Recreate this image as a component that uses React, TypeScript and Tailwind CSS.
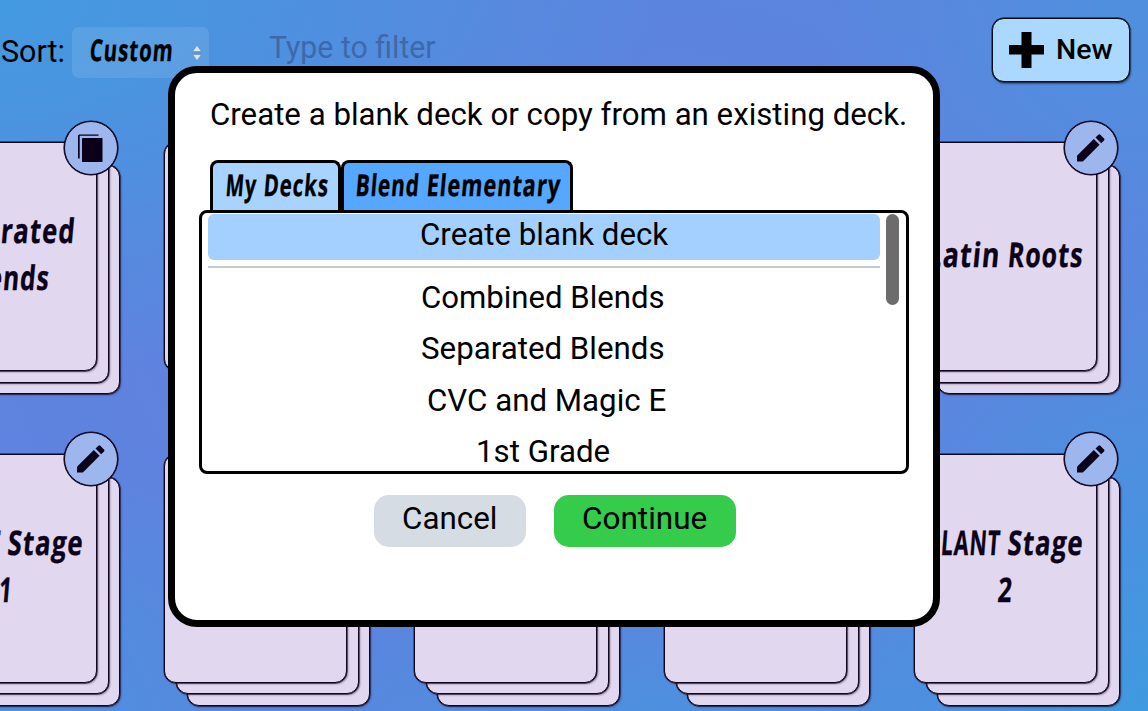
import { useLayoutEffect, useRef, useState } from "react";
import type { ReactNode } from "react";

type FitProps = { width: number; slant?: number; className?: string; children: ReactNode };

/** Sets one line of text to an exact width, with an optional slant. */
function Fit({ width, slant = 0, className = "", children }: FitProps) {
  const ref = useRef<HTMLSpanElement>(null);
  const [scale, setScale] = useState(1);
  useLayoutEffect(() => {
    if (ref.current) setScale(width / ref.current.offsetWidth);
  }, [width]);
  return (
    <span className="flex justify-start" style={{ width }}>
      <span
        ref={ref}
        className={`block flex-none origin-left whitespace-nowrap ${className}`}
        style={{ transform: `scaleX(${scale}) skewX(${-slant}deg)` }}
      >
        {children}
      </span>
    </span>
  );
}

type Word = { text: string; width: number };

/** A line of condensed, slanted display lettering, sized word by word. */
function Display({ words }: { words: Word[] }) {
  return (
    <span className="flex gap-[7px]">
      {words.map((w) => (
        <Fit
          key={w.text}
          width={w.width}
          slant={7}
          className="font-['Open_Sans'] font-bold tracking-[1.5px] [-webkit-text-stroke:0.4px_currentColor]"
        >
          {w.text}
        </Fit>
      ))}
    </span>
  );
}

function CopyIcon() {
  return (
    <svg viewBox="0 0 28 30" className="h-[30px] w-[28px]" fill="#0b0019">
      <path d="M1 3q0-1.500 1.500-1.500H21.500v1.300H3.300q-.6 0-.6.6V25.500H1z" />
      <rect x="5" y="5" width="20.500" height="24" rx="0.6" />
    </svg>
  );
}

function PencilIcon() {
  return (
    <svg viewBox="0 0 28 28" className="h-[28px] w-[28px]" fill="#0b0019">
      <path d="M0 21.8 16.8 5 22.6 10.8 5.800 27.600H0z" />
      <path d="M18.500 3.600 21.300.7q1-.9 2 0L27 4.400q.9 1 0 2L24.200 9.300z" />
    </svg>
  );
}

type Deck = { id: number; lines: Word[][]; icon: "copy" | "pencil" };

const plantStage: Word[] = [
  { text: "PLANT", width: 74 },
  { text: "Stage", width: 76 },
];

const decks: Deck[] = [
  { id: 1, lines: [[{ text: "Separated", width: 140 }], [{ text: "Blends", width: 88 }]], icon: "copy" },
  { id: 2, lines: [], icon: "pencil" },
  { id: 3, lines: [], icon: "pencil" },
  { id: 4, lines: [], icon: "pencil" },
  { id: 5, lines: [[{ text: "Latin", width: 74 }, { text: "Roots", width: 76 }]], icon: "pencil" },
  { id: 6, lines: [plantStage, [{ text: "1", width: 14 }]], icon: "pencil" },
  { id: 7, lines: [], icon: "pencil" },
  { id: 8, lines: [], icon: "pencil" },
  { id: 9, lines: [], icon: "pencil" },
  { id: 10, lines: [plantStage, [{ text: "2", width: 15 }]], icon: "pencil" },
];

const SHEET =
  "rounded-[12px] border border-[#12051f] bg-[#e1d7ee] shadow-[0_0_0_0.4px_#12051f,1px_1px_2px_rgba(20,5,40,0.5)]";

function DeckCard({ deck }: { deck: Deck }) {
  return (
    <div className="relative h-[229px] w-[183px]">
      <div className={`absolute left-[23px] top-[23px] h-full w-full ${SHEET}`} />
      <div className={`absolute left-[11.5px] top-[11.5px] h-full w-full ${SHEET}`} />
      <div className={`relative flex h-full w-full flex-col items-center justify-center pb-[5px] text-[34px] leading-[47px] text-[#0b0019] ${SHEET}`}>
        {deck.lines.map((words, i) => (
          <Display key={i} words={words} />
        ))}
      </div>
      <div className="absolute left-[150px] top-[-21.5px] flex h-[54px] w-[54px] items-center justify-center rounded-full border border-[#12051f] bg-[#9db6ee] shadow-[0_0_0_0.6px_#12051f]">
        {deck.icon === "copy" ? <CopyIcon /> : <PencilIcon />}
      </div>
    </div>
  );
}

const options = [
  { text: "Combined Blends", width: 244 },
  { text: "Separated Blends", width: 244 },
  { text: "CVC and Magic E", width: 239 },
  { text: "1st Grade", width: 134 },
];

function NewDeckDialog() {
  return (
    <div className="absolute left-[168px] top-[66px] flex h-[561px] w-[772px] flex-col rounded-[29px] border-[7px] border-black bg-white px-[24px] pt-[22px]">
      <div className="pl-[10.5px] leading-[40px]">
        <Fit width={697}>Create a blank deck or copy from an existing deck.</Fit>
      </div>
      <div className="mt-[25px] flex h-[50px] pl-[11px] text-[30px] leading-[43px]">
        <div className="w-[131px] rounded-t-[8px] border-[3px] border-b-0 border-black bg-[#a8d3ff] pl-[13px]">
          <Display words={[{ text: "My", width: 31 }, { text: "Decks", width: 65 }]} />
        </div>
        <div className="w-[232px] rounded-t-[8px] border-[3px] border-b-0 border-black bg-[#55a7ff] pl-[12px]">
          <Display words={[{ text: "Blend", width: 64 }, { text: "Elementary", width: 134 }]} />
        </div>
      </div>
      <div className="flex h-[264px] w-[710px] flex-none overflow-hidden rounded-[8px] border-[3px] border-black pl-[6px]">
        <div className="w-[672px] pt-px">
          <div className="flex h-[46px] justify-center rounded-[6px] bg-[#a3d0ff] pr-px leading-[42px]">
            <Fit width={248}>Create blank deck</Fit>
          </div>
          <div className="mb-[4px] mt-[6px] h-[2px] bg-[#c5cacb]" />
          {options.map((o) => (
            <div
              key={o.text}
              className={`flex h-[51.4px] justify-center leading-[51px] ${o.text.startsWith("CVC") ? "pl-[5px]" : "pr-[2px]"}`}
            >
              <Fit width={o.width}>{o.text}</Fit>
            </div>
          ))}
        </div>
        <div className="ml-[6px] mt-[0.5px] h-[91.5px] w-[12.5px] rounded-full bg-[#6c6c6c]" />
      </div>
      <div className="mt-[20.5px] flex gap-[27.5px] pl-[174.5px] leading-[48px]">
        <button className="flex h-[52.5px] w-[152.5px] justify-center rounded-[15px] bg-[#d5dce4]">
          <Fit width={95}>Cancel</Fit>
        </button>
        <button className="flex h-[52.5px] w-[182px] justify-center rounded-[15px] bg-[#35cb4b]">
          <Fit width={125}>Continue</Fit>
        </button>
      </div>
    </div>
  );
}

export default function App() {
  return (
    <div className="relative h-[711px] w-[1148px] overflow-hidden bg-[#5b85de] bg-[radial-gradient(ellipse_660px_380px_at_0%_0%,#439ae0,transparent),radial-gradient(ellipse_330px_480px_at_100%_100%,#3f9ae0,transparent),radial-gradient(ellipse_330px_300px_at_100%_0%,#4f90de,transparent),radial-gradient(ellipse_500px_140px_at_60%_100%,#4d90de,transparent),radial-gradient(ellipse_300px_260px_at_0%_100%,#4b92de,transparent),radial-gradient(ellipse_700px_400px_at_45%_50%,#6380df,transparent)] font-['Roboto'] text-[31px] text-black">
      <header className="flex h-[142px] items-start">
        <div className="w-[72px] pl-[1px] pt-[29px] leading-[46px]">
          <Fit width={64}>Sort:</Fit>
        </div>
        <div className="mt-[27px] flex h-[51px] w-[137px] items-center rounded-[7px] bg-white/10 pl-[18px] pr-[7px] text-[30px] leading-[44px]">
          <div className="pb-[6px]">
            <Display words={[{ text: "Custom", width: 84 }]} />
          </div>
          <svg viewBox="0 0 10 14" className="ml-auto h-[14px] w-[10px]" fill="#e4e4e4">
            <path d="M5 0 9 5.5H1z" />
            <path d="M5 14 9 8.5H1z" />
            <path d="M.8 5.8h8.4M.8 8.3h8.4" stroke="#59718f" strokeWidth=".6" />
          </svg>
        </div>
        <div className="ml-[60px] pt-[25px] leading-[46px] text-[#3f68aa]">
          <Fit width={167}>Type to filter</Fit>
        </div>
        <button className="ml-auto mr-[18px] mt-[18px] flex h-[64px] w-[138px] rounded-[12px] border border-[#050a10] bg-[#aad8ff] pl-[16px] pt-[13px] shadow-[0_0_0_0.4px_#050a10,1px_2px_2px_rgba(0,0,0,0.4)]">
          <svg viewBox="0 0 35 36" className="h-[36px] w-[35px]" fill="#000">
            <path d="M12.5 0h10v13H35v9.5H22.5V36h-10V22.5H0V13h12.5z" />
          </svg>
          <span className="ml-[12px] text-[28px] font-medium leading-[36px]">
            <Fit width={57}>New</Fit>
          </span>
        </button>
      </header>
      <main className="ml-[-86px] grid w-[1250px] grid-cols-[repeat(5,250px)] gap-y-[82.5px]">
        {decks.map((d) => (
          <DeckCard key={d.id} deck={d} />
        ))}
      </main>
      <NewDeckDialog />
    </div>
  );
}
